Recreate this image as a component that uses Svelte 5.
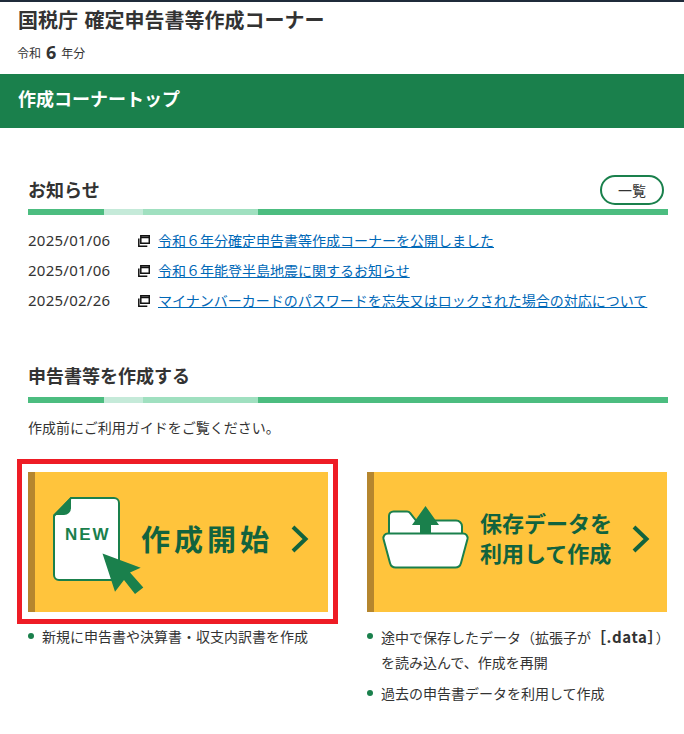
<script lang="ts">
  const news = [
    { date: '2025/01/06', text: '令和６年分確定申告書等作成コーナーを公開しました' },
    { date: '2025/01/06', text: '令和６年能登半島地震に関するお知らせ' },
    { date: '2025/02/26', text: 'マイナンバーカードのパスワードを忘失又はロックされた場合の対応について' }
  ];
</script>

{#snippet rule()}
  <div class="rule">
    <span class="seg seg-a"></span>
    <span class="seg seg-b"></span>
    <span class="seg seg-c"></span>
    <span class="seg seg-d"></span>
  </div>
{/snippet}

{#snippet chevron()}
  <svg class="chevron" viewBox="0 0 18 28" aria-hidden="true">
    <path d="M2 2l12.500 12L2 26" />
  </svg>
{/snippet}

<div class="page">
  <header class="head">
    <h1>国税庁 確定申告書等作成コーナー</h1>
    <p class="year">令和<b>6</b>年分</p>
  </header>

  <div class="band">作成コーナートップ</div>

  <main class="content">
    <section class="news">
      <div class="heading">
        <h2>お知らせ</h2>
        <a class="more" href="#list">一覧</a>
      </div>
      {@render rule()}
      <ul class="news-list">
        {#each news as item}
          <li>
            <span class="date">{item.date}</span>
            <svg class="newwin" viewBox="0 0 12 12" aria-hidden="true">
              <path d="M2.800 .8h8.500v7.500h-8.500z M2.800 2.400h8.500" />
              <path d="M.8 3.500v7.700h8.500" />
            </svg>
            <a href="#item">{item.text}</a>
          </li>
        {/each}
      </ul>
    </section>

    <section class="create">
      <h2>申告書等を作成する</h2>
      {@render rule()}
      <p class="lead">作成前にご利用ガイドをご覧ください。</p>

      <div class="cards">
        <div class="col">
          <div class="highlight">
            <a class="card" href="#start">
              <svg class="icon-new" viewBox="50 494 96 102" aria-hidden="true">
                <path class="doc" d="M71 498h43a5 5 0 0 1 5 5v72a5 5 0 0 1-5 5H59a5 5 0 0 1-5-5v-59z" />
                <path class="fill" d="M71 497v11a7 7 0 0 1-7 7H53z" />
                <text class="new" x="65" y="540">NEW</text>
                <path class="fill" d="M102.500 553.500L140.700 567.700 130 572.500 143.300 587.500 135 594 124 580 115 591.700z" />
              </svg>
              <span class="label label-big">作成開始</span>
              {@render chevron()}
            </a>
          </div>
          <ul class="notes">
            <li>新規に申告書や決算書・収支内訳書を作成</li>
          </ul>
        </div>

        <div class="col">
          <a class="card card-plain" href="#resume">
            <svg class="icon-folder" viewBox="380 504 92 68" aria-hidden="true">
              <path class="doc" d="M389 534v-18a4.500 4.500 0 0 1 4.500-4.500h13.500a4 4 0 0 1 3.200 1.600L416 520.500h40a6 6 0 0 1 6 6V534z" />
              <path class="doc" d="M388 533.500h75a4.500 4.500 0 0 1 4.500 5.500l-6.500 24a6 6 0 0 1-6 4.500h-59a6 6 0 0 1-6-4.500l-6.500-24a4.500 4.500 0 0 1 4.500-5.500z" />
              <path class="fill" d="M425.500 506L439 525h-8v8.500h-11V525h-8z" />
            </svg>
            <span class="label label-two">保存データを<br />利用して作成</span>
            {@render chevron()}
          </a>
          <ul class="notes">
            <li>途中で保存したデータ（拡張子が<b>［.data］</b>）<br />を読み込んで、作成を再開</li>
            <li>過去の申告書データを利用して作成</li>
          </ul>
        </div>
      </div>
    </section>
  </main>
</div>

<style>
  :global(body) {
    background: #fff;
  }
  .page {
    font-family: "Noto Sans CJK JP", "Noto Sans", sans-serif;
    color: #333;
    font-size: 14px;
  }
  h1, h2, p, ul {
    margin: 0;
    padding: 0;
  }
  ul {
    list-style: none;
  }

  .head {
    border-top: 2px solid #1f2b3a;
    height: 74px;
    padding-left: 18px;
    box-sizing: border-box;
  }
  .head h1 {
    font-size: 20px;
    line-height: 26px;
    padding-top: 5px;
    font-weight: 700;
    white-space: nowrap;
    word-spacing: 2px;
  }
  .year {
    display: flex;
    align-items: center;
    gap: 5px;
    height: 28px;
    margin-top: 5px;
    margin-left: -1px;
    font-size: 12px;
  }
  .year b {
    font-size: 18px;
    font-family: "Open Sans", sans-serif;
  }

  .band {
    background: #1a804c;
    color: #fff;
    height: 54px;
    line-height: 48px;
    padding-left: 18px;
    font-size: 18px;
    font-weight: 700;
  }

  .content {
    padding-top: 47px;
  }
  .news, .create {
    padding: 0 16px 0 28px;
  }
  .heading {
    display: flex;
    justify-content: space-between;
    align-items: center;
    height: 30px;
    margin-bottom: 4px;
  }
  h2 {
    font-size: 18px;
    font-weight: 700;
    line-height: 28px;
    margin-bottom: 2px;
  }
  .more {
    width: 64px;
    height: 30px;
    margin-right: 4px;
    box-sizing: border-box;
    border: 2px solid #1a804c;
    border-radius: 15px;
    color: #333;
    font-size: 14px;
    line-height: 26px;
    text-align: center;
    text-decoration: none;
  }

  .rule {
    display: flex;
    height: 6px;
  }
  .seg-a { width: 76px; background: #4cbd80; }
  .seg-b { width: 39px; background: #c5ead9; }
  .seg-c { width: 115px; background: #a0e0c0; }
  .seg-d { flex: 1; background: #4cbd80; }

  .news-list {
    padding-top: 10px;
  }
  .news-list li {
    display: flex;
    align-items: center;
    height: 30px;
  }
  .date {
    width: 110px;
    font-family: "Noto Sans", sans-serif;
    font-size: 15px;
    letter-spacing: 0.25px;
  }
  .newwin {
    width: 12px;
    height: 12px;
    margin-right: 8px;
    margin-top: 2px;
    fill: none;
    stroke: #111;
    stroke-width: 1.5;
  }
  .news-list a {
    color: #0068b7;
    font-size: 14px;
    text-decoration: underline;
    white-space: nowrap;
  }

  .create {
    padding-top: 46px;
  }
  .create h2 {
    margin-bottom: 8px;
  }
  .lead {
    margin-top: 14px;
    font-size: 14px;
    line-height: 20px;
  }

  .cards {
    display: grid;
    grid-template-columns: 300px 300px;
    column-gap: 39px;
    padding-top: 35px;
  }
  .highlight {
    border: 5px solid #ee1c25;
    padding: 8px 5px 7px 6px;
    margin: -13px -10px -12px -11px;
  }
  .card {
    display: flex;
    align-items: center;
    height: 140px;
    box-sizing: border-box;
    background: #ffc43c;
    border-left: 7px solid #b5862e;
    color: #12633e;
    text-decoration: none;
  }
  .icon-new {
    width: 96px;
    height: 102px;
    margin: 6px -5px 0 15px;
    flex: none;
  }
  .icon-folder {
    width: 92px;
    height: 68px;
    margin: 0 8px 8px 6px;
    flex: none;
  }
  .doc {
    fill: #fff;
    stroke: #1a804c;
    stroke-width: 2;
  }
  .fill {
    fill: #1a804c;
  }
  .new {
    fill: #1a804c;
    font-family: "Liberation Sans", sans-serif;
    font-size: 17px;
    font-weight: 700;
    letter-spacing: 2px;
  }
  .label {
    font-weight: 700;
    white-space: nowrap;
    margin-bottom: 8px;
  }
  .label-big {
    font-size: 29px;
    letter-spacing: 4px;
  }
  .label-two {
    font-size: 22px;
    line-height: 30px;
    margin-bottom: 10px;
  }
  .chevron {
    width: 18px;
    height: 28px;
    margin: 0 0 6px 18px;
    fill: none;
    stroke: #12633e;
    stroke-width: 4;
  }
  .card-plain .chevron {
    margin-left: 20px;
  }

  .notes {
    padding-top: 12px;
    font-size: 14px;
    line-height: 25px;
  }
  .notes li {
    position: relative;
    padding-left: 14px;
    margin-bottom: 6px;
    white-space: nowrap;
  }
  .notes li::before {
    content: "";
    position: absolute;
    left: 0;
    top: 9px;
    width: 6px;
    height: 6px;
    border-radius: 50%;
    background: #1a804c;
  }
  .notes b {
    font-weight: 700;
    font-size: 15px;
    letter-spacing: 0.6px;
  }
</style>
